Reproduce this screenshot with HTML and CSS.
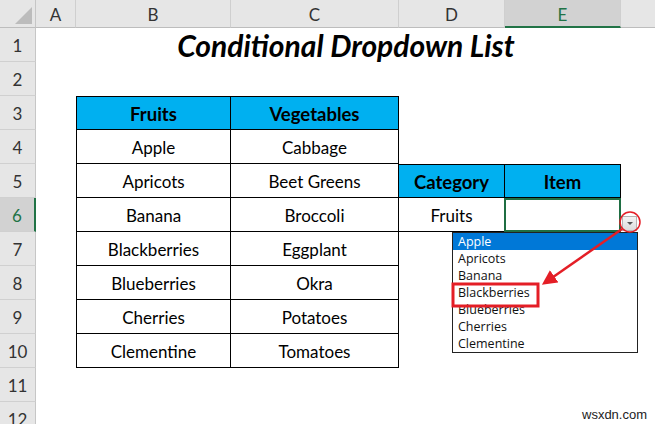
FILE: index.html
```html
<!DOCTYPE html>
<html>
<head>
<meta charset="utf-8">
<link rel="stylesheet" href="styles.css">
</head>
<body>
<div class="sheet">
  <div class="corner"><span class="tri"></span></div>
  <div class="colhead">A</div>
  <div class="colhead">B</div>
  <div class="colhead">C</div>
  <div class="colhead">D</div>
  <div class="colhead sel">E</div>
  <div class="colhead last"></div>

  <div class="rowhead">1</div><div class="cell"></div>
  <div class="cell title">Conditional Dropdown List</div>

  <div class="rowhead">2</div>

  <div class="rowhead">3</div><div class="cell"></div>
  <div class="cell t hd left top">Fruits</div><div class="cell t hd top">Vegetables</div>

  <div class="rowhead">4</div><div class="cell"></div>
  <div class="cell t left">Apple</div><div class="cell t">Cabbage</div>

  <div class="rowhead">5</div><div class="cell"></div>
  <div class="cell t left">Apricots</div><div class="cell t">Beet Greens</div>
  <div class="cell t hd top">Category</div><div class="cell t hd top">Item</div>

  <div class="rowhead sel">6</div><div class="cell"></div>
  <div class="cell t left">Banana</div><div class="cell t">Broccoli</div>
  <div class="cell t">Fruits</div><div class="cell t active"></div>

  <div class="rowhead">7</div><div class="cell"></div>
  <div class="cell t left">Blackberries</div><div class="cell t">Eggplant</div>

  <div class="rowhead">8</div><div class="cell"></div>
  <div class="cell t left">Blueberries</div><div class="cell t">Okra</div>

  <div class="rowhead">9</div><div class="cell"></div>
  <div class="cell t left">Cherries</div><div class="cell t">Potatoes</div>

  <div class="rowhead">10</div><div class="cell"></div>
  <div class="cell t left">Clementine</div><div class="cell t">Tomatoes</div>

  <div class="rowhead">11</div>
  <div class="rowhead">12</div>

  <div class="dd-btn"><span class="caret"></span></div>
  <ul class="dd-list">
    <li class="hl">Apple</li>
    <li>Apricots</li>
    <li>Banana</li>
    <li>Blackberries</li>
    <li>Blueberries</li>
    <li>Cherries</li>
    <li>Clementine</li>
  </ul>

  <svg class="marks" width="655" height="424" viewBox="0 0 655 424">
    <defs>
      <marker id="ah" markerWidth="6" markerHeight="6" refX="4" refY="3" orient="auto" markerUnits="strokeWidth">
        <path d="M0,0 L6,3 L0,6 Z" fill="#e41e26"/>
      </marker>
    </defs>
    <circle cx="630" cy="222" r="10" fill="none" stroke="#e41e26" stroke-width="1.5"/>
    <line x1="622" y1="229" x2="546" y2="282" stroke="#e41e26" stroke-width="2.5" marker-end="url(#ah)"/>
    <rect x="453" y="284" width="85" height="22" fill="none" stroke="#e41e26" stroke-width="3"/>
  </svg>

  <div class="watermark">wsxdn.com</div>
</div>
</body>
</html>
```

FILE: styles.css
```css
html, body {
  margin: 0;
  padding: 0;
  background: #fff;
  overflow: hidden;
}
.sheet {
  position: relative;
  width: 655px;
  height: 424px;
  overflow: hidden;
  display: grid;
  grid-template-columns: 36px 40px 155px 168px 106px 116px 34px;
  grid-template-rows: 28px repeat(12, 34px);
  font-family: Lato, "Liberation Sans", sans-serif;
  color: #000;
}
.corner {
  position: relative;
  background: #e6e6e6;
  border-right: 1px solid #c6c6c6;
  border-bottom: 1px solid #bdbdbd;
  box-sizing: border-box;
}
.tri {
  position: absolute;
  right: 3px;
  bottom: 3px;
  width: 0;
  height: 0;
  border-left: 17px solid transparent;
  border-bottom: 17px solid #bcbcbc;
}
.colhead {
  background: #e6e6e6;
  border-right: 1px solid #cfcfcf;
  border-bottom: 1px solid #bdbdbd;
  box-sizing: border-box;
  display: flex;
  align-items: center;
  justify-content: center;
  font-size: 17px;
  color: #333;
  padding-top: 2px;
}
.colhead.sel {
  background: #d2d2d2;
  color: #217346;
  border-bottom: 2px solid #217346;
}
.colhead.last {
  border-right: none;
}
.rowhead {
  grid-column: 1;
  background: #e6e6e6;
  border-right: 1px solid #c6c6c6;
  border-bottom: 1px solid #d0d0d0;
  box-sizing: border-box;
  display: flex;
  align-items: center;
  justify-content: center;
  font-size: 17px;
  color: #333;
  padding-top: 2px;
}
.rowhead.sel {
  background: #d2d2d2;
  color: #217346;
  border-right: 2px solid #217346;
}
.cell {
  box-sizing: border-box;
  display: flex;
  align-items: center;
  justify-content: center;
  white-space: nowrap;
}
.title {
  grid-column: span 4;
  font-size: 30px;
  font-weight: 700;
  font-style: italic;
  padding-right: 5px;
}
.t {
  font-size: 17px;
  border-right: 1px solid #000;
  border-bottom: 1px solid #000;
  padding-top: 1px;
}
.t.left { border-left: 1px solid #000; }
.t.top { border-top: 1px solid #000; }
.t.hd {
  background: #00b0f0;
  font-weight: 700;
  font-size: 18.5px;
}
.t.active {
  border: 2px solid #1f6e43;
  margin-left: -1px;
}
.dd-btn {
  position: absolute;
  left: 622px;
  top: 216px;
  width: 15px;
  height: 15px;
  box-sizing: border-box;
  background: linear-gradient(#f4f4f4, #dcdcdc);
  border: 1px solid #b5b5b5;
  display: flex;
  align-items: center;
  justify-content: center;
}
.caret {
  width: 0;
  height: 0;
  border-left: 3px solid transparent;
  border-right: 3px solid transparent;
  border-top: 3px solid #555;
}
.dd-list {
  position: absolute;
  left: 452px;
  top: 232px;
  width: 186px;
  margin: 0;
  padding: 0;
  list-style: none;
  border: 1px solid #222;
  background: #fff;
  font-family: "Open Sans", "Noto Sans", sans-serif;
  font-size: 12.5px;
  box-sizing: border-box;
}
.dd-list li {
  height: 17px;
  line-height: 17px;
  padding-left: 5px;
  color: #111;
}
.dd-list li.hl {
  background: #0078d7;
  color: #fff;
}
.marks {
  position: absolute;
  left: 0;
  top: 0;
  pointer-events: none;
}
.watermark {
  position: absolute;
  left: 582px;
  top: 407px;
  font-family: "Liberation Sans", Arial, sans-serif;
  font-size: 13px;
  color: #222;
}
```
